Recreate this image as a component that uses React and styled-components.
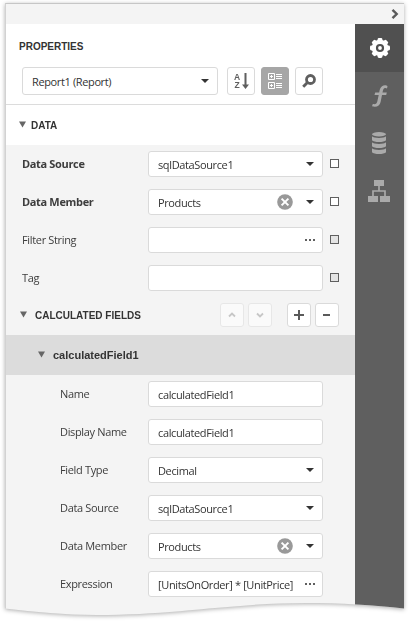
import React from "react";
import styled, { createGlobalStyle } from "styled-components";

const GlobalStyle = createGlobalStyle`
  * { box-sizing: border-box; }
  body { margin: 0; background: #fff; overflow: hidden; }
`;

const Shadow = styled.div`
  width: 409px;
  height: 622px;
  padding: 3px 5px 0 5px;
  filter: drop-shadow(0 1px 2px rgba(0, 0, 0, 0.32));
`;
const Panel = styled.div`
  width: 399px;
  height: 613px;
  display: flex;
  flex-direction: column;
  background: #f4f4f4;
  border-top: 1px solid #c6c6c6;
  border-left: 1px solid #d2d2d2;
  clip-path: path("M0 0H399V605.5C370 602 335 600 300 600C230 600 170 612 92 612C60 612 30 609 0 605.5Z");
`;
const TopBar = styled.div`
  height: 20px;
  flex: none;
  display: flex;
  justify-content: flex-end;
  padding: 4px 5px 0 0;
`;
const Body = styled.div`
  flex: 1;
  display: flex;
`;
const Main = styled.div`
  width: 349px;
  flex: none;
`;
const Rail = styled.div`
  flex: 1;
  background: #5f5f5f;
`;
const RailItem = styled.div`
  height: ${(p) => p.$h || 48}px;
  padding-right: ${(p) => (p.$h ? 1 : 0)}px;
  display: flex;
  align-items: center;
  justify-content: center;
  background: ${(p) => (p.$active ? "#505050" : "transparent")};
`;
const Head = styled.div`
  height: 81px;
  background: #fff;
  border-bottom: 1px solid #dcdcdc;
  padding: 15px 0 0 13px;
`;
const Caption = styled.span`
  font: bold ${(p) => p.$size || 10}px/14px "Liberation Sans", Arial, sans-serif;
  color: #333;
  white-space: nowrap;
  padding-top: ${(p) => (p.$size ? 0 : 1)}px;
`;
const Title = styled.div`
  height: 28px;
  display: flex;
  align-items: flex-start;
`;
const Tools = styled.div`
  display: flex;
  gap: 6px;
  padding-left: 3px;
`;
const Control = styled.div`
  display: flex;
  align-items: center;
  flex: none;
  width: ${(p) => p.$w || 175}px;
  height: ${(p) => p.$h || 26}px;
  margin-right: ${(p) => p.$gap || 0}px;
  border: 1px solid #dadada;
  border-radius: 3px;
  background: #fff;
  padding: 0 7px 0 9px;
`;
const Value = styled.span`
  flex: 1;
  font: 11px/16px "Open Sans", "Noto Sans", sans-serif;
  letter-spacing: -0.37px;
  color: #333;
  white-space: nowrap;
  padding-top: 2px;
`;
const IconButton = styled.div`
  width: ${(p) => p.$size || 28}px;
  height: ${(p) => p.$size || 28}px;
  flex: none;
  display: flex;
  align-items: center;
  justify-content: center;
  border: 1px solid ${(p) => (p.$active ? "#a6a6a6" : "#dadada")};
  border-radius: 3px;
  background: ${(p) => (p.$active ? "#a6a6a6" : "#fff")};
  opacity: ${(p) => (p.$disabled ? 0.5 : 1)};
`;
const SortLetters = styled.span`
  display: flex;
  flex-direction: column;
  align-items: center;
  width: 7px;
  font: bold 8.5px/8px "Liberation Sans", Arial, sans-serif;
  color: #5f5f5f;
  margin-right: 1px;
`;
const SortLetter = styled.span`
  height: 8px;
  overflow: hidden;
`;
const Section = styled.div`
  height: 40px;
  display: flex;
  align-items: center;
  gap: ${(p) => p.$gap || 8}px;
  padding-left: ${(p) => p.$indent || 13}px;
  background: ${(p) => p.$bg || "transparent"};
`;
const Actions = styled.div`
  display: flex;
  gap: 4px;
  margin-left: auto;
  padding-right: 16px;
`;
const ActionGap = styled.div`
  width: 7px;
`;
const Rows = styled.div`
  padding-top: 6px;
  height: ${(p) => (p.$h ? `${p.$h}px` : "auto")};
`;
const Row = styled.div`
  height: 38px;
  display: flex;
  align-items: flex-start;
  padding-left: ${(p) => (p.$nested ? 54 : 16)}px;
`;
const Label = styled.label`
  width: ${(p) => (p.$nested ? 88 : 126)}px;
  flex: none;
  font: ${(p) => (p.$bold ? 700 : 400)} 11px/16px "Open Sans", "Noto Sans", sans-serif;
  letter-spacing: -0.34px;
  color: #3d3d3d;
  padding-top: 5px;
  white-space: nowrap;
`;
const Marker = styled.span`
  width: 9px;
  height: 9px;
  margin: 8px 0 0 7px;
  border: 1px solid #5f5f5f;
  background: ${(p) => (p.$filled ? "#e4e4e4" : "#fff")};
`;
const Clear = styled.svg`
  margin-right: 12px;
`;
const TwistyIcon = styled.svg`
  margin-bottom: 2px;
`;

const Caret = () => (
  <svg width="10" height="6" viewBox="0 0 10 6"><path d="M1 1h8L5 5z" fill="#333" /></svg>
);
const Dots = () => (
  <svg width="11" height="4" viewBox="0 0 11 4"><path d="M1 1h2v2H1zM5 1h2v2H5zM9 1h2v2H9z" fill="#5f5f5f" /></svg>
);
const Twisty = () => (
  <TwistyIcon width="7" height="7" viewBox="0 0 7 7"><path d="M0 .5h7L3.5 6.5z" fill="#666" /></TwistyIcon>
);
const ClearIcon = () => (
  <Clear width="16" height="16" viewBox="0 0 16 16">
    <circle cx="8" cy="8" r="7.8" fill="#999" />
    <path d="M4.6 4.600l6.800 6.800M11.400 4.600l-6.800 6.800" stroke="#fff" strokeWidth="2" />
  </Clear>
);
const Chevron = ({ d }) => (
  <svg width="8" height="8" viewBox="0 0 8 8"><path d={d} fill="none" stroke="#999" strokeWidth="1.8" /></svg>
);
const Gear = () => (
  <svg width="20" height="20" viewBox="-10 -10 20 20">
    <g fill="#fff">
      <circle r="8.300" />
      {[0, 45, 90, 135].map((a) => (
        <rect key={a} x="-2.4" y="-10" width="4.8" height="20" rx="1.4" transform={`rotate(${a})`} />
      ))}
    </g>
    <circle r="3" fill="none" stroke="#505050" strokeWidth="2.2" />
  </svg>
);

function Field({ label, value, type, bold, nested, marker }) {
  return (
    <Row $nested={nested}>
      <Label $bold={bold} $nested={nested}>{label}</Label>
      <Control>
        <Value>{value}</Value>
        {type === "clear" && <ClearIcon />}
        {(type === "select" || type === "clear") && <Caret />}
        {type === "dots" && <Dots />}
      </Control>
      {marker && <Marker $filled={marker === "filled"} />}
    </Row>
  );
}

export default function App() {
  return (
    <>
      <GlobalStyle />
      <Shadow>
        <Panel>
          <TopBar>
            <svg width="8" height="12" viewBox="0 0 8 12"><path d="M1.500 1.800L5.700 6L1.500 10.200" fill="none" stroke="#5a5a5a" strokeWidth="2.4" /></svg>
          </TopBar>
          <Body>
            <Main>
              <Head>
                <Title><Caption>PROPERTIES</Caption></Title>
                <Tools>
                  <Control $w={196} $h={28} $gap={3}><Value>Report1 (Report)</Value><Caret /></Control>
                  <IconButton>
                    <SortLetters><SortLetter>A</SortLetter><SortLetter>Z</SortLetter></SortLetters>
                    <svg width="7" height="16" viewBox="0 0 7 16"><path d="M2.500 0h2v11.500H7L3.500 16 0 11.500h2.500z" fill="#5f5f5f" /></svg>
                  </IconButton>
                  <IconButton $active>
                    <svg width="14" height="16" viewBox="0 0 14 16">
                      <path d="M.5.5h6v6h-6zM.5 9.500h6v6h-6zM2 3.500h3M3.500 2v3M2 12.500h3M3.500 11v3M8 1.500h6M8 3.500h6M8 5.500h6M8 10.500h6M8 12.500h6M8 14.500h6" fill="none" stroke="#fff" />
                    </svg>
                  </IconButton>
                  <IconButton>
                    <svg width="14" height="14" viewBox="0 0 14 14"><circle cx="8.500" cy="5.500" r="4" fill="none" stroke="#5f5f5f" strokeWidth="2.800" /><path d="M5.700 8.300L1.200 12.800" stroke="#5f5f5f" strokeWidth="2.900" /></svg>
                  </IconButton>
                </Tools>
              </Head>
              <Section $bg="#fff" $gap={5}><Twisty /><Caption>DATA</Caption></Section>
              <Rows $h={150}>
                <Field label="Data Source" value="sqlDataSource1" type="select" bold marker="empty" />
                <Field label="Data Member" value="Products" type="clear" bold marker="empty" />
                <Field label="Filter String" type="dots" marker="filled" />
                <Field label="Tag" marker="filled" />
              </Rows>
              <Section $indent={14}>
                <Twisty /><Caption>CALCULATED FIELDS</Caption>
                <Actions>
                  <IconButton $size={24} $disabled><Chevron d="M1 5.500l3-3 3 3" /></IconButton>
                  <IconButton $size={24} $disabled><Chevron d="M1 2.500l3 3 3-3" /></IconButton>
                  <ActionGap />
                  <IconButton $size={24}><svg width="10" height="10" viewBox="0 0 10 10"><path d="M4 0h2v4h4v2H6v4H4V6H0V4h4z" fill="#5a5a5a" /></svg></IconButton>
                  <IconButton $size={24}><svg width="8" height="2" viewBox="0 0 8 2"><path d="M0 0h7v2H0z" fill="#5a5a5a" /></svg></IconButton>
                </Actions>
              </Section>
              <Section $bg="#dcdcdc" $indent={32}><Twisty /><Caption $size={11}>calculatedField1</Caption></Section>
              <Rows>
                <Field nested label="Name" value="calculatedField1" />
                <Field nested label="Display Name" value="calculatedField1" />
                <Field nested label="Field Type" value="Decimal" type="select" />
                <Field nested label="Data Source" value="sqlDataSource1" type="select" />
                <Field nested label="Data Member" value="Products" type="clear" />
                <Field nested label="Expression" value="[UnitsOnOrder] * [UnitPrice]" type="dots" />
              </Rows>
            </Main>
            <Rail>
              <RailItem $active><Gear /></RailItem>
              <RailItem>
                <svg width="16" height="22" viewBox="0 0 16 22">
                  <path d="M15.500 1.200C14.500.1 11.800-.1 10 1.200 8.200 2.600 7.700 4.600 7.200 7.500H3.200L2.500 10h4.200L5.300 16.500C4.900 18.500 3.500 19.600.8 19L0 21.300C4.500 22.700 7.800 20.800 8.600 17L10 10h4.200L14.800 7.500H10.500C11 4.500 11.500 2.800 13.500 2.900 14 2.900 14.500 3.200 15 3.500z" fill="#aaa" />
                </svg>
              </RailItem>
              <RailItem $h={46}>
                <svg width="14" height="22" viewBox="0 0 14 22">
                  <g fill="#aaa">
                    <ellipse cx="7" cy="2.200" rx="7" ry="2.200" />
                    <path d="M0 4.300c1.500 2.300 12.500 2.300 14 0v3.900c-1.500 2.400-12.500 2.400-14 0zM0 10.300c1.500 2.300 12.500 2.300 14 0v3.900c-1.500 2.400-12.500 2.400-14 0zM0 16.300c1.500 2.300 12.500 2.300 14 0v3.900c-1.500 2.400-12.500 2.400-14 0z" />
                  </g>
                </svg>
              </RailItem>
              <RailItem $h={50}>
                <svg width="22" height="22" viewBox="0 0 22 22"><path d="M6 0h10v6H6zM0 16h10v6H0zM12 16h10v6H12z" fill="#aaa" /><path d="M11 6v5M5 16v-5h12v5" fill="none" stroke="#aaa" strokeWidth="1.700" /></svg>
              </RailItem>
            </Rail>
          </Body>
        </Panel>
      </Shadow>
    </>
  );
}
